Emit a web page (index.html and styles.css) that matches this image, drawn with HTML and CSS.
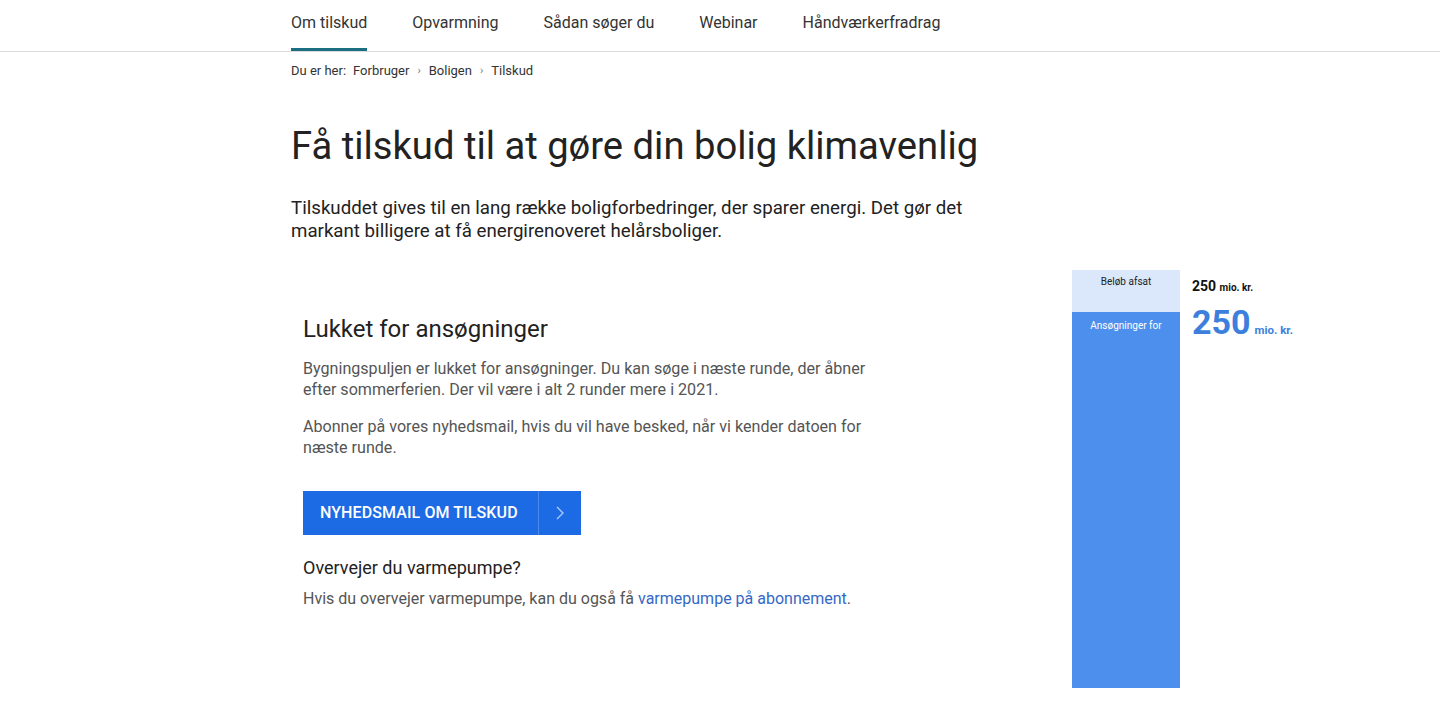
FILE: index.html
```html
<!DOCTYPE html>
<html lang="da">
<head>
<meta charset="utf-8">
<title>Få tilskud til at gøre din bolig klimavenlig</title>
<link rel="stylesheet" href="styles.css">
</head>
<body>
<header class="topnav">
  <nav class="wrap nav-items">
    <a class="nav-item active" href="#">Om tilskud</a>
    <a class="nav-item" href="#">Opvarmning</a>
    <a class="nav-item" href="#">Sådan søger du</a>
    <a class="nav-item" href="#">Webinar</a>
    <a class="nav-item" href="#">Håndværkerfradrag</a>
  </nav>
</header>
<main class="wrap">
  <div class="breadcrumb">
    <span class="bc-label">Du er her:</span>
    <a href="#">Forbruger</a><span class="sep">›</span>
    <a href="#">Boligen</a><span class="sep">›</span>
    <span>Tilskud</span>
  </div>
  <h1 class="title">Få tilskud til at gøre din bolig klimavenlig</h1>
  <p class="lead">Tilskuddet gives til en lang række boligforbedringer, der sparer energi. Det gør det markant billigere at få energirenoveret helårsboliger.</p>
  <section class="content-row">
    <div class="card">
      <h2 class="card-title">Lukket for ansøgninger</h2>
      <p class="card-text">Bygningspuljen er lukket for ansøgninger. Du kan søge i næste runde, der åbner efter sommerferien. Der vil være i alt 2 runder mere i 2021.</p>
      <p class="card-text">Abonner på vores nyhedsmail, hvis du vil have besked, når vi kender datoen for næste runde.</p>
      <a class="btn" href="#"><span class="btn-label">NYHEDSMAIL OM TILSKUD</span><span class="btn-arrow"><svg width="10" height="16" viewBox="0 0 10 16"><path d="M2 2 L8 8 L2 14" fill="none" stroke="#a9c8ff" stroke-width="1.4"/></svg></span></a>
      <h3 class="sub-title">Overvejer du varmepumpe?</h3>
      <p class="sub-text">Hvis du overvejer varmepumpe, kan du også få <a href="#">varmepumpe på abonnement</a>.</p>
    </div>
    <div class="chart">
      <div class="bar">
        <div class="bar-top">Beløb afsat</div>
        <div class="bar-fill">Ansøgninger for</div>
      </div>
      <div class="chart-values">
        <div class="val-small"><b>250</b> <span>mio. kr.</span></div>
        <div class="val-big"><b>250</b> <span>mio. kr.</span></div>
      </div>
    </div>
  </section>
</main>
</body>
</html>
```
FILE: styles.css
```css
* { box-sizing: border-box; }
html, body { margin: 0; padding: 0; }
body {
  font-family: Roboto, "Liberation Sans", Arial, sans-serif;
  color: #222;
  background: #fff;
}
a { text-decoration: none; color: inherit; }
.wrap {
  width: 858px;
  margin: 0 auto;
}
.topnav {
  border-bottom: 1px solid #dcdcdc;
}
.nav-items {
  display: flex;
  gap: 45px;
}
.nav-item {
  font-size: 16px;
  line-height: 20px;
  color: #333;
  padding-top: 13px;
  height: 51px;
  border-bottom: 3px solid transparent;
}
.nav-item.active {
  border-bottom-color: #1b6f80;
}
.breadcrumb {
  font-size: 13px;
  line-height: 16px;
  color: #333;
  padding-top: 11px;
  display: flex;
  align-items: center;
}
.bc-label { margin-right: 7px; }
.breadcrumb .sep {
  margin: 0 8px;
  color: #777;
  font-size: 11px;
}
.title {
  font-size: 38.2px;
  font-weight: 400;
  line-height: 46px;
  margin: 44px 0 0;
  color: #222;
}
.lead {
  font-size: 18.7px;
  line-height: 23px;
  margin: 28px 0 0;
  color: #222;
  width: 700px;
}
.content-row {
  display: flex;
  margin-top: 27px;
  width: 1010px;
}
.card {
  width: 781px;
  padding: 44px 0 0 12px;
}
.card-title {
  font-size: 24px;
  font-weight: 400;
  line-height: 30px;
  margin: 0 0 14px;
  color: #222;
}
.card-text {
  font-size: 16.1px;
  line-height: 21px;
  color: #555;
  margin: 0 0 16px;
  width: 580px;
}
.btn {
  display: inline-flex;
  height: 44px;
  background: #1d6ae5;
  color: #fff;
  margin-top: 17px;
}
.btn-label {
  font-size: 16px;
  font-weight: 500;
  padding: 0 20px 0 17px;
  line-height: 44px;
  letter-spacing: 0.1px;
}
.btn-arrow {
  width: 43px;
  border-left: 1px solid #4b89ee;
  display: flex;
  align-items: center;
  justify-content: center;
}
.sub-title {
  font-size: 18px;
  font-weight: 400;
  line-height: 24px;
  margin: 21px 0 9px;
  color: #222;
}
.sub-text {
  font-size: 16px;
  line-height: 20px;
  color: #555;
  margin: 0;
}
.sub-text a { color: #3568c4; }
.chart {
  display: flex;
}
.bar {
  width: 108px;
  height: 418px;
  display: flex;
  flex-direction: column;
}
.bar-top {
  height: 42px;
  background: #dbe8fb;
  font-size: 10px;
  color: #222;
  text-align: center;
  padding-top: 6px;
}
.bar-fill {
  flex: 1;
  background: #4d8fed;
  color: #fff;
  font-size: 10px;
  text-align: center;
  padding-top: 8px;
}
.chart-values {
  padding-left: 12px;
  padding-top: 8px;
}
.val-small {
  font-size: 14px;
  color: #111;
}
.val-small b { font-weight: 700; }
.val-small span { font-size: 10px; font-weight: 700; }
.val-big {
  color: #3d7fdc;
  margin-top: 10px;
}
.val-big b { font-size: 34px; font-weight: 700; line-height: 36px; }
.val-big span { font-size: 11.5px; font-weight: 700; }
```
